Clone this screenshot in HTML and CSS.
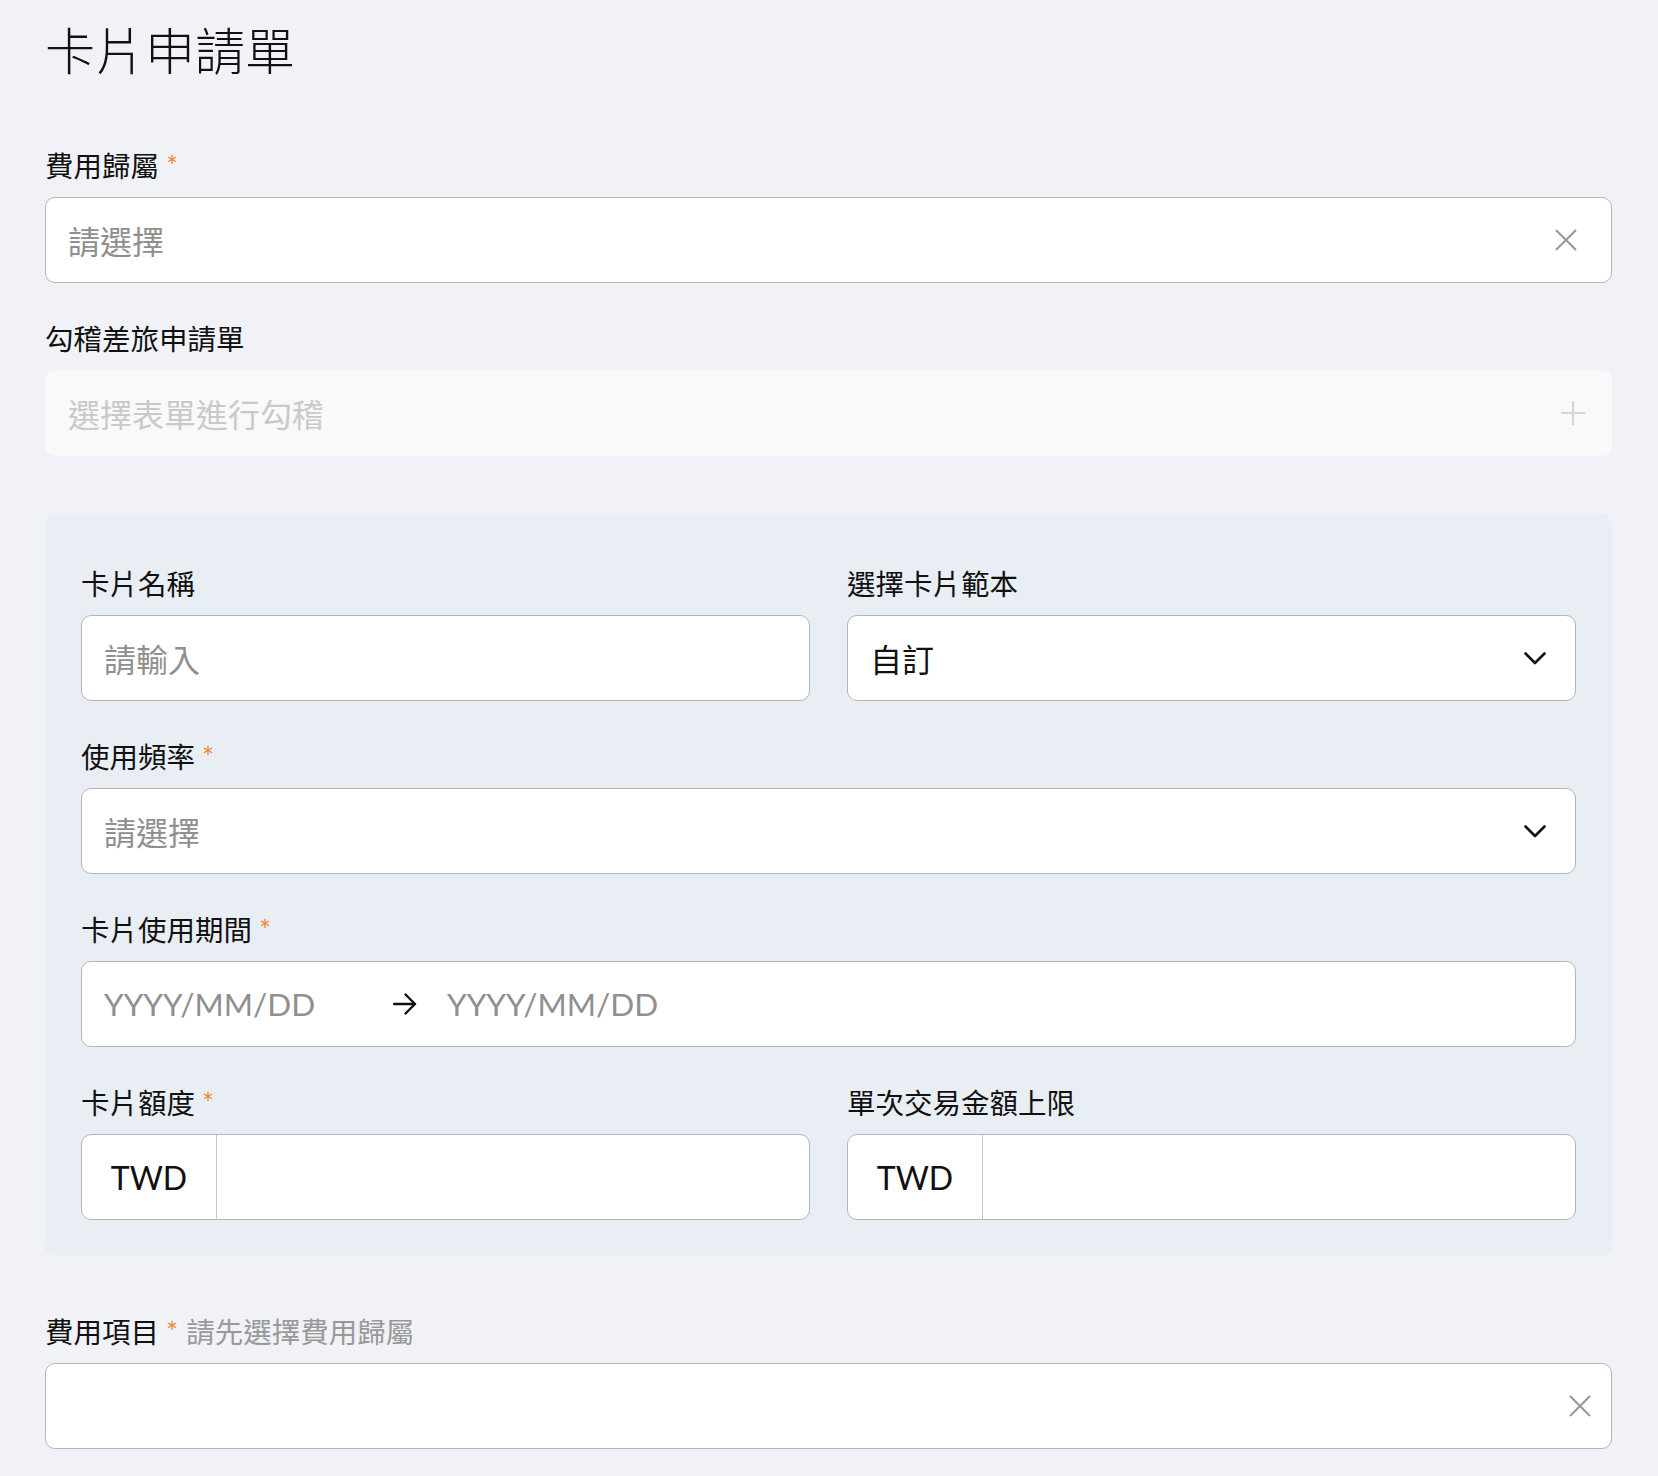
FILE: index.html
```html
<!DOCTYPE html>
<html lang="zh-Hant">
<head>
<meta charset="utf-8">
<title>卡片申請單</title>
<link rel="stylesheet" href="styles.css">
</head>
<body>
<main class="page">
  <h1 class="title">卡片申請單</h1>

  <div class="field">
    <div class="label">費用歸屬<span class="req">*</span></div>
    <div class="input select clear-a">
      <span class="placeholder">請選擇</span>
      <svg class="icon-x" width="22" height="22" viewBox="0 0 22 22"><path d="M1 1L21 21M21 1L1 21" stroke="#9a9a9a" stroke-width="2.2" fill="none"/></svg>
    </div>
  </div>

  <div class="field">
    <div class="label">勾稽差旅申請單</div>
    <div class="input disabled">
      <span class="placeholder light">選擇表單進行勾稽</span>
      <svg class="icon-plus" width="24" height="24" viewBox="0 0 24 24"><path d="M12 0V24M0 12H24" stroke="#d6d6d6" stroke-width="2.2" fill="none"/></svg>
    </div>
  </div>

  <section class="panel">
    <div class="row two">
      <div class="field">
        <div class="label">卡片名稱</div>
        <div class="input"><span class="placeholder">請輸入</span></div>
      </div>
      <div class="field">
        <div class="label">選擇卡片範本</div>
        <div class="input select chev">
          <span class="value">自訂</span>
          <svg class="icon-chev" width="22" height="13" viewBox="0 0 22 13"><path d="M1.5 1.5L11 11L20.5 1.5" stroke="#111" stroke-width="2.6" fill="none" stroke-linecap="round" stroke-linejoin="round"/></svg>
        </div>
      </div>
    </div>

    <div class="field">
      <div class="label">使用頻率<span class="req">*</span></div>
      <div class="input select chev">
        <span class="placeholder">請選擇</span>
        <svg class="icon-chev" width="22" height="13" viewBox="0 0 22 13"><path d="M1.5 1.5L11 11L20.5 1.5" stroke="#111" stroke-width="2.6" fill="none" stroke-linecap="round" stroke-linejoin="round"/></svg>
      </div>
    </div>

    <div class="field">
      <div class="label">卡片使用期間<span class="req">*</span></div>
      <div class="input range">
        <span class="placeholder date start">YYYY/MM/DD</span>
        <svg class="icon-arrow" width="24" height="24" viewBox="0 0 24 24"><path d="M1 12H22M12.5 2.5L22 12L12.5 21.5" stroke="#111" stroke-width="2.4" fill="none" stroke-linecap="round" stroke-linejoin="round"/></svg>
        <span class="placeholder date">YYYY/MM/DD</span>
      </div>
    </div>

    <div class="row two last">
      <div class="field">
        <div class="label">卡片額度<span class="req">*</span></div>
        <div class="input addon-input">
          <span class="addon">TWD</span>
          <span class="fill"></span>
        </div>
      </div>
      <div class="field">
        <div class="label">單次交易金額上限</div>
        <div class="input addon-input">
          <span class="addon">TWD</span>
          <span class="fill"></span>
        </div>
      </div>
    </div>
  </section>

  <div class="field after-panel">
    <div class="label">費用項目<span class="req">*</span><span class="hint">請先選擇費用歸屬</span></div>
    <div class="input select clear-b">
      <span class="placeholder"></span>
      <svg class="icon-x" width="22" height="22" viewBox="0 0 22 22"><path d="M1 1L21 21M21 1L1 21" stroke="#9a9a9a" stroke-width="2.2" fill="none"/></svg>
    </div>
  </div>
</main>
</body>
</html>
```

FILE: styles.css
```css
* { box-sizing: border-box; }

html, body {
  margin: 0;
  padding: 0;
  background: #f0f2f7;
}

body {
  font-family: Lato, "Noto Sans CJK TC", "Noto Sans", sans-serif;
  color: #141414;
}

.page {
  padding: 21px 46px 0 45px;
}

.title {
  margin: 0 0 68px 0;
  font-size: 50px;
  line-height: 60px;
  font-weight: 300;
  color: #111;
}

.field {
  margin-bottom: 39px;
}

.label {
  font-size: 28.5px;
  line-height: 34px;
  height: 34px;
  margin-bottom: 14px;
  color: #111;
  white-space: nowrap;
}

.req {
  color: #f08a35;
  margin-left: 7px;
}

.hint {
  color: #999;
  margin-left: 8px;
}

.input {
  height: 86px;
  background: #fff;
  border: 1px solid #b5b5b5;
  border-radius: 10px;
  display: flex;
  align-items: center;
  padding: 0 22px;
  font-size: 32px;
}

.placeholder {
  color: #8f8f8f;
  flex: 1;
}

.placeholder.light {
  color: #c9c9c9;
}

.value {
  flex: 1;
  color: #111;
}

.select.clear-a { padding-right: 34px; }
.select.clear-b { padding-right: 20px; }
.select.chev { padding-right: 29px; }

.disabled {
  background: #f9f9f9;
  border-color: transparent;
  padding-right: 26px;
}

.icon-x, .icon-plus, .icon-chev, .icon-arrow {
  flex: none;
  display: block;
}

.panel {
  margin-top: 58px;
  background: #e9eef5;
  border-radius: 10px;
  padding: 53px 36px 36px 36px;
}

.row.two {
  display: grid;
  grid-template-columns: 1fr 1fr;
  column-gap: 37px;
  margin-bottom: 39px;
}

.row.two .field {
  margin-bottom: 0;
}

.row.last { margin-bottom: 0; }

.range .date {
  flex: none;
  font-size: 31.5px;
}

.range .date.start {
  width: 289px;
}

.range .icon-arrow {
  margin-right: 30px;
}

.addon-input {
  padding: 0;
  overflow: hidden;
}

.addon {
  width: 135px;
  height: 100%;
  border-right: 1px solid #c8c8c8;
  display: flex;
  align-items: center;
  justify-content: center;
  font-size: 32px;
  color: #111;
  flex: none;
}

.fill { flex: 1; }

.after-panel {
  margin-top: 59px;
  margin-bottom: 0;
}
```
